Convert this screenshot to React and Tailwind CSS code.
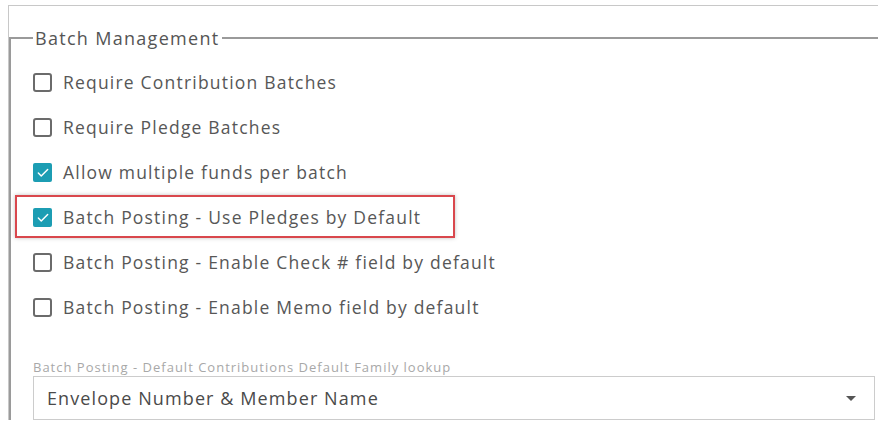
import { Check } from "lucide-react";

const options = [
  { label: "Require Contribution Batches", checked: false },
  { label: "Require Pledge Batches", checked: false },
  { label: "Allow multiple funds per batch", checked: true },
  { label: "Batch Posting - Use Pledges by Default", checked: true, flagged: true },
  { label: "Batch Posting - Enable Check # field by default", checked: false },
  { label: "Batch Posting - Enable Memo field by default", checked: false },
];

function Box({ checked }) {
  if (checked) {
    return (
      <span className="flex h-[19px] w-[19px] shrink-0 items-center justify-center rounded-[2px] bg-[#1c9db3]">
        <Check size={14} strokeWidth={2.5} className="text-white" />
      </span>
    );
  }
  return (
    <span className="h-[19px] w-[19px] shrink-0 rounded-[3px] border-2 border-[#6b6b6b] bg-white" />
  );
}

function OptionRow({ label, checked, flagged }) {
  return (
    <div className="relative flex h-[45px] items-center pl-[22px]">
      {flagged && (
        <div className="absolute left-[4px] top-0 h-[43px] w-[440px] border-2 border-[#d9474d] shadow-[0_0_4px_rgba(0,0,0,0.25)]" />
      )}
      <Box checked={checked} />
      <span className="ml-[11px] text-[17.5px] tracking-[1.2px] text-[#575757]">{label}</span>
    </div>
  );
}

export default function App() {
  return (
    <div
      className="h-[421px] w-[878px] overflow-hidden bg-white"
      style={{ fontFamily: '"Open Sans", "Liberation Sans", sans-serif' }}
    >
      <div className="ml-[8px] mt-[5px] border-l border-t border-[#c8c8c8] pt-[20px]">
        <fieldset className="border-l-2 border-t-2 border-[#9a9a9a]">
          <legend className="ml-[22px] px-[2px] text-[18px] leading-[24px] tracking-[1.3px] text-[#555555]">
            Batch Management
          </legend>
          <div className="mt-[10px] flex flex-col">
            {options.map((opt) => (
              <OptionRow key={opt.label} {...opt} />
            ))}
          </div>
          <div className="ml-[22px] mr-[3px] mt-[30px]">
            <div className="text-[13px] leading-[14px] tracking-[1px] text-[#a8a8a8]">
              Batch Posting - Default Contributions Default Family lookup
            </div>
            <div className="mt-[2px] flex h-[44px] items-center justify-between border border-[#cccccc] pl-[13px] pr-[18px]">
              <span className="text-[18px] tracking-[1.1px] text-[#4a4a4a]">
                Envelope Number &amp; Member Name
              </span>
              <span className="h-0 w-0 border-x-[5px] border-t-[5px] border-x-transparent border-t-[#555555]" />
            </div>
          </div>
        </fieldset>
      </div>
    </div>
  );
}
